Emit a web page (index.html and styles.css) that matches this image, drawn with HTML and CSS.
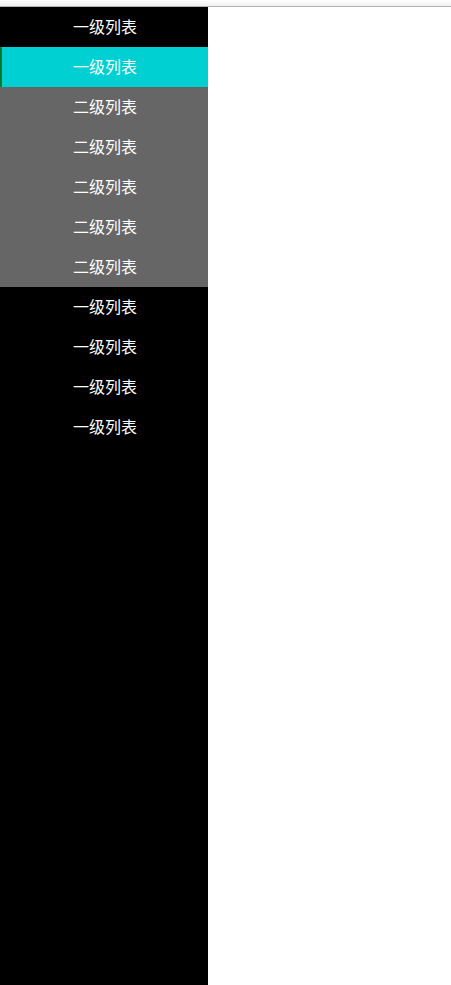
FILE: index.html
```html
<!DOCTYPE html>
<html lang="zh">
<head>
<meta charset="utf-8">
<title>列表</title>
<link rel="stylesheet" href="styles.css">
</head>
<body>
<div class="topbar"></div>
<div class="layout">
  <nav class="sidebar">
    <ul class="menu">
      <li class="item">一级列表</li>
      <li class="item active">一级列表</li>
      <li class="item sub">二级列表</li>
      <li class="item sub">二级列表</li>
      <li class="item sub">二级列表</li>
      <li class="item sub">二级列表</li>
      <li class="item sub">二级列表</li>
      <li class="item">一级列表</li>
      <li class="item">一级列表</li>
      <li class="item">一级列表</li>
      <li class="item">一级列表</li>
    </ul>
  </nav>
  <main class="content"></main>
</div>
</body>
</html>
```
FILE: styles.css
```css
html, body {
  margin: 0;
  padding: 0;
  height: 100%;
  background: #fff;
}
body {
  display: flex;
  flex-direction: column;
  font-family: "Microsoft YaHei", "Noto Sans CJK SC", sans-serif;
}
.topbar {
  height: 6px;
  background: linear-gradient(#ffffff, #f0f0f0);
  border-bottom: 1px solid #b4b4b4;
  flex: none;
}
.layout {
  flex: 1;
  display: flex;
}
.sidebar {
  width: 208px;
  background: #000;
}
.menu {
  list-style: none;
  margin: 0;
  padding: 0;
}
.item {
  height: 40px;
  line-height: 38px;
  text-align: center;
  color: #fff;
  font-size: 16px;
  padding-left: 2px;
}
.item.active {
  background: #00d0d2;
  box-shadow: inset 2px 0 0 #0a7a2a;
}
.item.sub {
  background: #666;
}
.content {
  flex: 1;
}
```
